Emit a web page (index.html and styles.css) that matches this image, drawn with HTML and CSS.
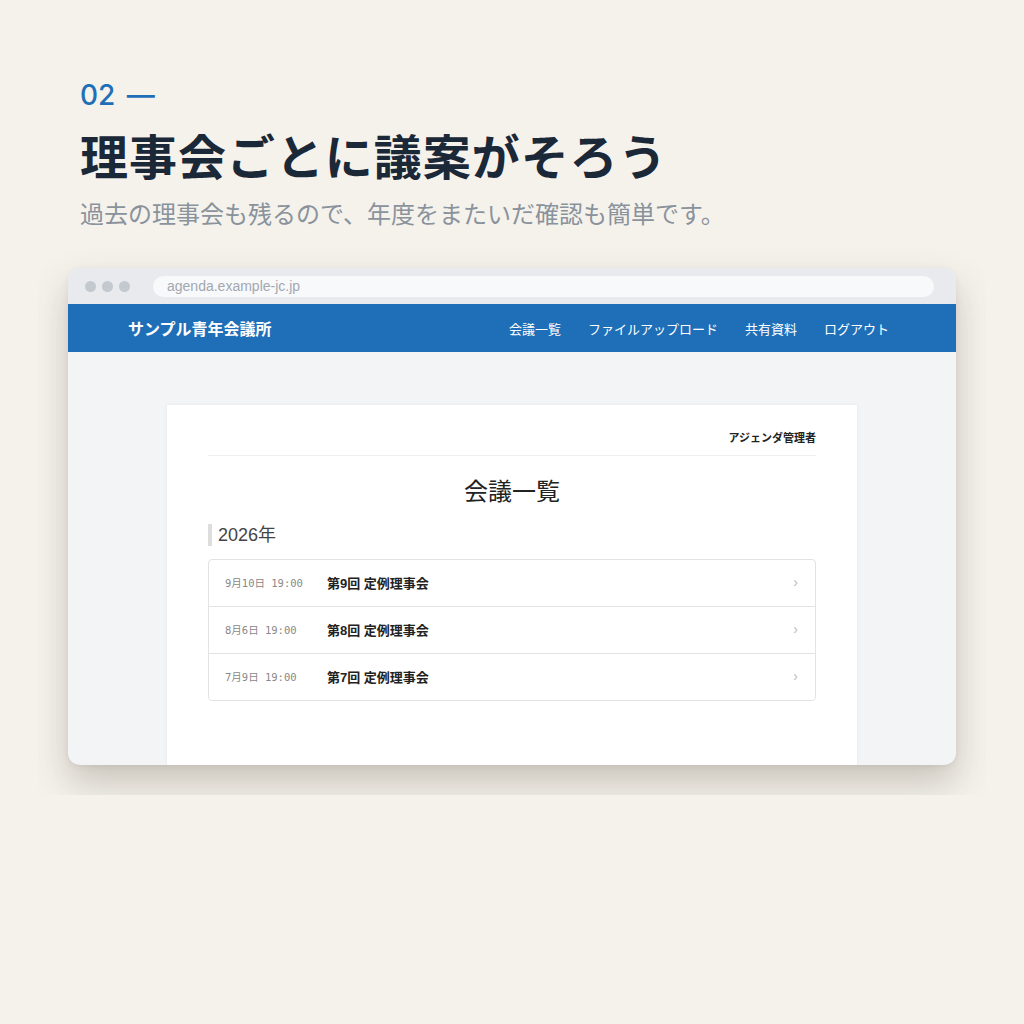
FILE: index.html
```html
<!DOCTYPE html>
<html lang="ja">
<head>
    <meta charset="UTF-8">
    <meta name="viewport" content="width=device-width, initial-scale=1.0">
    <title>理事会ごとに議案がそろう</title>
    <link rel="stylesheet" href="styles.css">
</head>
<body>
    <div class="intro">
        <div class="eyebrow">02 <span class="dash">—</span></div>
        <h1 class="headline">理事会ごとに議案がそろう</h1>
        <p class="lead">過去の理事会も残るので、年度をまたいだ確認も簡単です。</p>
    </div>

    <div class="shot">
        <div class="window">
            <div class="chrome">
                <div class="dots">
                    <span></span><span></span><span></span>
                </div>
                <div class="url">agenda.example-jc.jp</div>
            </div>

            <nav class="navbar">
                <div class="brand">サンプル青年会議所</div>
                <div class="nav-links">
                    <a>会議一覧</a>
                    <a>ファイルアップロード</a>
                    <a>共有資料</a>
                    <a>ログアウト</a>
                </div>
            </nav>

            <div class="app">
                <div class="card">
                    <div class="card-head">アジェンダ管理者</div>
                    <h2 class="page-title">会議一覧</h2>
                    <h3 class="year">2026年</h3>

                    <div class="meeting-list">
                        <div class="meeting">
                            <span class="date">9月10日 19:00</span>
                            <span class="name">第9回 定例理事会</span>
                            <span class="arrow">›</span>
                        </div>
                        <div class="meeting">
                            <span class="date">8月6日 19:00</span>
                            <span class="name">第8回 定例理事会</span>
                            <span class="arrow">›</span>
                        </div>
                        <div class="meeting">
                            <span class="date">7月9日 19:00</span>
                            <span class="name">第7回 定例理事会</span>
                            <span class="arrow">›</span>
                        </div>
                    </div>
                </div>
            </div>
        </div>
    </div>
</body>
</html>
```

FILE: styles.css
```css
body {
    margin: 0;
    background-color: #f5f2ec;
    font-family: "Noto Sans CJK JP", "Noto Sans", sans-serif;
    color: #1b2838;
}
.intro {
    padding: 79px 80px 0;
}
.eyebrow {
    font-family: Inter, "Noto Sans CJK JP", sans-serif;
    font-size: 28px;
    line-height: 32px;
    font-weight: 500;
    color: #1f6fb8;
}
.eyebrow .dash {
    margin-left: 4px;
}
.headline {
    margin: 13px 0 0;
    font-size: 48px;
    line-height: 60px;
    font-weight: 700;
    letter-spacing: 0.02em;
    color: #1b2838;
}
.lead {
    margin: 13px 0 0;
    font-size: 24px;
    line-height: 32px;
    color: #8a929c;
}

/* screenshot frame, clipped so the shadow stays inside */
.shot {
    margin: 9px 38px 0;
    padding: 30px;
    overflow: hidden;
}
.window {
    border-radius: 12px;
    overflow: hidden;
    background: #f3f4f6;
    box-shadow: 0 18px 36px rgba(70, 60, 40, 0.25), 0 2px 6px rgba(0, 0, 0, 0.06);
}
.chrome {
    height: 36px;
    display: flex;
    align-items: center;
    padding: 0 22px 0 17px;
    background: #e8eaee;
}
.dots {
    display: flex;
    gap: 6px;
}
.dots span {
    width: 11px;
    height: 11px;
    border-radius: 50%;
    background: #c4c8cf;
}
.url {
    flex: 1;
    margin-left: 23px;
    height: 21px;
    line-height: 21px;
    padding-left: 14px;
    border-radius: 11px;
    background: #f8f9fb;
    font-family: "Liberation Sans", Arial, sans-serif;
    font-size: 14px;
    color: #a3a8b0;
}
.navbar {
    height: 48px;
    display: flex;
    align-items: center;
    justify-content: space-between;
    padding: 0 67px 0 60px;
    background: #1f6fb8;
    color: white;
    font-family: "Liberation Sans", "Noto Sans CJK JP", sans-serif;
}
.brand {
    font-size: 16px;
    font-weight: 700;
}
.nav-links {
    display: flex;
    gap: 27px;
    font-size: 13px;
}
.app {
    height: 413px;
    overflow: hidden;
    padding-top: 53px;
    box-sizing: border-box;
    font-family: "Liberation Sans", "Noto Sans CJK JP", sans-serif;
}
.card {
    width: 690px;
    min-height: 420px;
    margin: 0 auto;
    padding: 0 41px;
    box-sizing: border-box;
    background: white;
    box-shadow: 0 0 4px rgba(0, 0, 0, 0.06);
}
.card-head {
    padding: 25px 0 9px;
    line-height: 16px;
    text-align: right;
    font-size: 11px;
    font-weight: 700;
    color: #222;
    border-bottom: 1px solid #eeeeee;
}
.page-title {
    margin: 20px 0 0;
    font-size: 24px;
    line-height: 32px;
    font-weight: 400;
    text-align: center;
    color: #222;
}
.year {
    margin: 16px 0 0;
    padding-left: 6px;
    border-left: 4px solid #dddddd;
    font-size: 18px;
    line-height: 22px;
    font-weight: 400;
    color: #444;
}
.meeting-list {
    margin-top: 13px;
    border: 1px solid #e3e3e3;
    border-radius: 4px;
}
.meeting {
    display: grid;
    grid-template-columns: 102px 1fr auto;
    align-items: center;
    height: 46px;
    padding: 0 17px 2px 16px;
    box-sizing: border-box;
}
.meeting + .meeting {
    height: 47px;
    border-top: 1px solid #e3e3e3;
}
.date {
    font-family: "DejaVu Sans Mono", "Noto Sans CJK JP", monospace;
    font-size: 10.5px;
    color: #888;
}
.name {
    font-size: 13px;
    font-weight: 700;
    color: #222;
}
.arrow {
    font-size: 14px;
    color: #bbbbbb;
}
```
